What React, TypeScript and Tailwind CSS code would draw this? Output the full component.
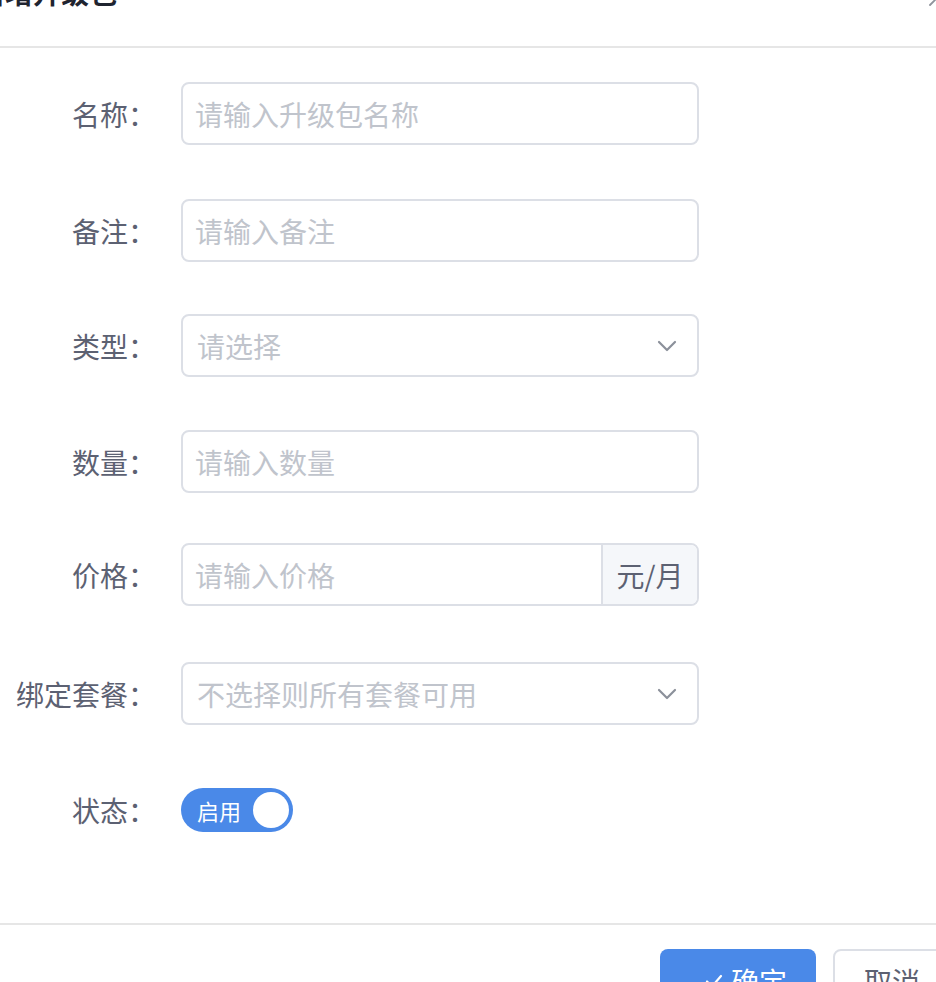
import React from 'react';

const font = {fontFamily: '"Noto Sans CJK SC", "Noto Sans", sans-serif'};

function Label({text}: {text: string}) {
  return (
    <div className="w-[156px] mr-[25px] shrink-0 text-right text-[28px] leading-[40px] text-[#5c6172]">
      {text}：
    </div>
  );
}

function Chevron() {
  return (
    <svg width="20" height="12" viewBox="0 0 20 12" fill="none" className="shrink-0">
      <path d="M2 2 L10 10 L18 2" stroke="#8b909a" strokeWidth="2.2" strokeLinecap="round" strokeLinejoin="round" />
    </svg>
  );
}

function TextInput({placeholder}: {placeholder: string}) {
  return (
    <input
      placeholder={placeholder}
      className="w-[518px] h-[63px] rounded-[8px] border-2 border-[#dcdfe6] bg-white px-[12px] text-[28px] text-[#606266] outline-none placeholder:text-[#c0c4cc]"
      style={font}
    />
  );
}

function SelectBox({placeholder}: {placeholder: string}) {
  return (
    <div className="w-[518px] h-[63px] rounded-[8px] border-2 border-[#dcdfe6] bg-white pl-[14px] pr-[20px] flex items-center justify-between">
      <span className="text-[28px] text-[#c0c4cc]">{placeholder}</span>
      <Chevron />
    </div>
  );
}

export default function App() {
  return (
    <div className="w-[936px] h-[982px] overflow-hidden bg-white flex flex-col" style={font}>
      {/* header */}
      <div className="relative h-[48px] shrink-0 border-b-2 border-[#e6e6e6]">
        <div className="-mt-[22px] -ml-[23px] text-[28px] leading-[28px] font-bold text-[#1f2430] whitespace-nowrap">
          新增升级包
        </div>
        <svg className="absolute left-[929px] -top-[14px]" width="20" height="20" viewBox="0 0 20 20" fill="none">
          <path d="M1 19 L19 1 M1 1 L19 19" stroke="#8f939c" strokeWidth="1.8" strokeLinecap="round" />
        </svg>
      </div>

      {/* body */}
      <div className="h-[875px] shrink-0 pt-[34px] flex flex-col">
        <div className="flex items-center">
          <Label text="名称" />
          <TextInput placeholder="请输入升级包名称" />
        </div>
        <div className="flex items-center mt-[54px]">
          <Label text="备注" />
          <TextInput placeholder="请输入备注" />
        </div>
        <div className="flex items-center mt-[52px]">
          <Label text="类型" />
          <SelectBox placeholder="请选择" />
        </div>
        <div className="flex items-center mt-[53px]">
          <Label text="数量" />
          <TextInput placeholder="请输入数量" />
        </div>
        <div className="flex items-center mt-[50px]">
          <Label text="价格" />
          <div className="w-[518px] h-[63px] rounded-[8px] border-2 border-[#dcdfe6] flex overflow-hidden">
            <input
              placeholder="请输入价格"
              className="flex-1 min-w-0 px-[12px] text-[28px] text-[#606266] outline-none placeholder:text-[#c0c4cc]"
              style={font}
            />
            <div className="w-[96px] shrink-0 border-l-2 border-[#dcdfe6] bg-[#f5f7fa] flex items-center justify-center text-[28px] text-[#5c6172]">
              元/月
            </div>
          </div>
        </div>
        <div className="flex items-center mt-[56px]">
          <Label text="绑定套餐" />
          <SelectBox placeholder="不选择则所有套餐可用" />
        </div>
        <div className="flex items-center h-[63px] mt-[53px]">
          <Label text="状态" />
          <div className="w-[112px] h-[44px] rounded-full bg-[#4a89e8] flex items-center justify-between pl-[16px] pr-[4px]">
            <span className="text-[22px] leading-[30px] text-white">启用</span>
            <span className="w-[36px] h-[36px] rounded-full bg-white" />
          </div>
        </div>
      </div>

      {/* footer */}
      <div className="shrink-0 border-t-2 border-[#e6e6e6] pt-[24px] pl-[660px] flex gap-[17px]">
        <button className="w-[156px] h-[64px] shrink-0 rounded-[8px] bg-[#4a89e8] text-white flex items-center pl-[45px] gap-[8px]">
          <svg width="18" height="18" viewBox="0 0 18 18" fill="none" className="shrink-0">
            <path d="M2 9.5 L7 14.5 L16 4" stroke="#fff" strokeWidth="2.2" strokeLinecap="round" strokeLinejoin="round" />
          </svg>
          <span className="text-[28px] leading-[40px]">确定</span>
        </button>
        <button className="w-[118px] h-[64px] shrink-0 rounded-[8px] border-2 border-[#dcdfe6] bg-white text-[28px] leading-[40px] text-[#5c6172]">
          取消
        </button>
      </div>
    </div>
  );
}
